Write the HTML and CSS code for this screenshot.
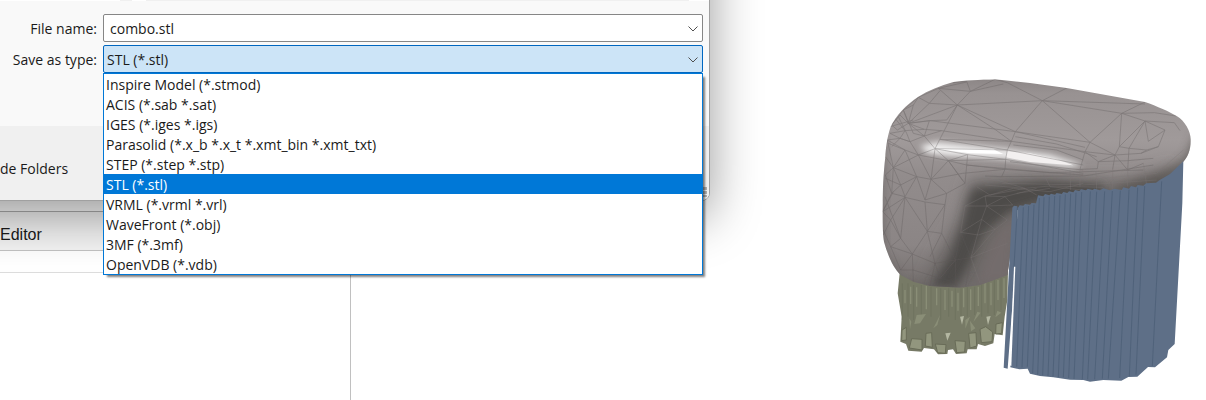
FILE: index.html
```
<!DOCTYPE html>
<html lang="en">
<head>
    <meta charset="UTF-8">
    <title>Save As</title>
    <link rel="stylesheet" href="styles.css">
</head>
<body>
    <div class="app">
        <div class="side-panel">
            <div class="side-title">Editor</div>
            <div class="side-header"></div>
            <div class="side-body"></div>
        </div>
        <div class="viewport">
            <svg class="model" viewBox="0 0 1008 990" role="img" aria-label="Model preview">
                <defs>
                    <linearGradient id="skin" x1="0" y1="0" x2="0" y2="1">
                        <stop offset="0" stop-color="#857f7f"/>
                        <stop offset="0.1" stop-color="#989292"/>
                        <stop offset="0.3" stop-color="#a09a9a"/>
                        <stop offset="0.45" stop-color="#928c8c"/>
                        <stop offset="0.75" stop-color="#8b8585"/>
                        <stop offset="1" stop-color="#696462"/>
                    </linearGradient>
                    <clipPath id="shape">
                        <path d="M375 28C330 29 280 32 250 36C210 47 175 62 145 80C110 102 75 140 62 170C50 205 47 240 46 260C40 310 38 370 38 400C37 450 38 490 42 515C52 552 68 592 92 615L130 635 180 648 270 653 330 645 412 615 440 420 540 390 780 360 860 345 905 312 940 275C953 262 963 238 962 208C962 185 945 152 920 138C900 126 860 108 825 96L590 54 480 39Z"/>
                    </clipPath>
                    <filter id="soft" x="-50%" y="-50%" width="200%" height="200%"><feGaussianBlur stdDeviation="22"/></filter>
                    <filter id="softer" x="-50%" y="-50%" width="200%" height="200%"><feGaussianBlur stdDeviation="14"/></filter>
                    <filter id="glow" x="-20%" y="-50%" width="140%" height="200%"><feGaussianBlur stdDeviation="9"/></filter>
                </defs>

                <!-- lattice support -->
                <path fill="#777a66" d="M90 600 83 670 95 740 91 815 108 822 115 842 155 845 162 834 192 838 204 853 232 852 234 840 249 838 258 852 290 850 293 838 320 838 324 822 345 828 370 820 374 792 398 796 404 740 412 690 414 600Z"/>
                <path stroke="#8a8e77" stroke-width="4" fill="none" d="M105 660V700M122 650V702M140 652V710M169 648V718M200 655V706M225 660V720M246 662V710M264 668V722M281 655V712M302 658V720M325 650V708M345 640V700M363 638V706M384 630V690M402 625V684"/>
                <path stroke="#6d705c" stroke-width="2" fill="none" d="M97 640V750M114 640V740M131 645V750M154 645V740M183 650V740M212 655V750M236 655V740M256 655V750M273 655V745M292 650V740M314 650V735M335 640V740M354 635V730M373 628V735M393 620V720"/>
                <path fill="#92967e" stroke="#696c58" stroke-width="3" d="M96 780 109 772V810L95 812ZM125 806 156 808V840L118 834ZM168 790 185 788 187 832 166 828ZM196 822 228 824 226 850 203 848ZM255 812 286 814 284 846 260 848ZM296 790 318 788 320 828 300 834ZM330 778 347 770 368 786 366 815 334 818ZM378 762 397 758 395 790 377 792Z"/>
                <path fill="#8a8e77" d="M118 745 124 755 120 778ZM140 735 168 732 150 760 133 762ZM210 735 202 765 190 775ZM322 725 332 728 310 756ZM300 752 316 775 303 784ZM382 722 394 728 376 742ZM286 750 300 740 286 776Z"/>
                <path fill="#b4b7a2" d="M270 740 282 738 276 764ZM349 740 362 738 354 765ZM226 790 242 788 232 812Z"/>

                <!-- shell -->
                <g clip-path="url(#shape)">
                    <path fill="url(#skin)" d="M0 0H1008V700H0Z"/>
                    <path fill="#6c6766" filter="url(#soft)" d="M300 330 500 322 760 332 920 290 880 380 500 430 430 640 150 670 200 560 270 440Z"/>
                    <path fill="#4e4b49" filter="url(#softer)" d="M310 356 420 346 520 336 700 346 700 375 500 400 420 425 340 490 300 580 260 650 180 655 240 560 275 470 295 390Z"/>
                    <path fill="#736c6c" filter="url(#softer)" d="M440 430 385 480 345 560 320 640 420 640Z"/>
                    <path fill="#514d4a" opacity="0.6" filter="url(#softer)" d="M975 190 945 262 870 310 740 350 740 375 900 370 1000 250Z"/>
                    <path fill="#5c5856" opacity="0.6" filter="url(#softer)" d="M30 520 95 635 260 670 100 680 20 620Z"/>
                    <path fill="#605b5a" opacity="0.6" filter="url(#softer)" d="M34 200 48 220 42 400 46 530 20 530Z"/>
                    <path fill="#ffffff" opacity="0.85" filter="url(#glow)" d="M150 228 200 216 400 236 540 254 640 285 600 292 400 266 230 258 170 248Z"/>
                    <path fill="#ffffff" d="M195 236 370 238 400 252 300 250Z"/>
                    <path fill="#f3f0f0" d="M412 244 480 250 560 268 610 286 480 276 408 262Z"/>
                    <g class="mesh">
                        <path d="M250 38 290 34 301 64 375 28 412 38 517 92 590 54M145 82 205 55 301 64 262 105 178 100 145 82M301 64 400 42M205 55 290 36M205 55 262 105 517 92 436 185 262 105M100 120 145 82 130 105 100 120M178 100 210 62M178 100 115 160 262 105 195 236M262 105 372 176 424 214M262 105 230 150 178 152 115 160M436 185 424 214 412 240 407 268"/>
                        <path d="M517 92 825 102M517 92 755 130 825 96M517 92 660 217 755 130 748 230 825 153 755 130 853 128 918 138M825 153 835 214 885 180 825 153 913 158 930 182M660 217 645 245 630 298M660 217 735 255M748 230 777 235 825 153M777 235 830 240 865 230 885 180M777 235 773 300M748 230 735 255 728 298M645 245 735 255 813 250 865 230M645 245 685 275 735 255M685 275 682 296 630 298M685 275 773 272 850 265M735 255 773 300 820 280M830 240 813 250"/>
                        <path d="M65 165 100 120 115 160 90 135 65 165 82 180 115 160 180 152 436 185 660 217M60 190 105 182 163 178 215 182 424 214M85 140 110 190 120 215 90 205 60 190M100 120 130 190 163 198 120 215 145 255 195 236 163 198 215 182M52 210 90 205 120 215M55 220 105 240 145 255M163 198 178 152M60 170 95 160 130 150M75 145 105 182 90 205 65 230M130 105 115 160 163 198M115 160 163 178"/>
                        <path d="M195 236 412 240M195 236 293 254 407 268 640 310M210 208 424 214 645 245M210 208 412 240 640 285M407 268 235 272 145 255 70 293 52 210 105 240 70 293 140 320 183 328 235 272 290 285 405 298 640 315M145 255 183 328 195 236M195 236 235 272 293 254 285 340 235 272 278 332M183 328 278 310 405 298 407 268M405 298 395 320 345 318M436 185 540 208 645 232M436 200 560 222 680 260M430 225 560 240 640 270M420 275 540 290 640 300M290 285 540 308 820 300M395 320 640 318 850 285"/>
                        <path d="M46 260 70 293 65 370 46 315 70 293M105 240 140 320 92 345 70 293M46 325 92 345 65 370 105 380 140 320 165 390 183 328M65 370 38 425 70 365M105 380 92 345M165 390 230 370 183 328M230 370 285 340M230 370 225 404 165 396 105 382 38 425M165 396 172 484 105 382 92 505 45 380M225 404 172 484 127 552 92 505 62 450 105 382M225 404 215 490 172 484 195 580 127 552 62 530 40 480M127 552 130 635M92 505 62 530 92 600 127 552M195 580 256 570 210 625 195 580 180 648M256 570 303 563 272 487 256 570 258 650M303 563 287 650M210 625 256 570M38 425 62 450 40 495M210 625 130 600 92 600M180 560 215 490 256 570"/>
                    </g>
                    <g class="mesh shaded">
                        <path d="M285 408 350 408 428 405M350 408 335 448 272 487 285 408 345 378 350 408 405 380 428 405M335 448 375 478 412 450 350 408M375 478 303 563 335 448M272 487 325 495 375 478M303 563 412 520M303 563 330 640M345 378 405 380 500 355M320 350 360 375 430 355 540 365 640 340M345 345 465 355 540 348 700 352M380 330 465 355 500 375M345 378 465 355M440 370 540 355M395 340 640 345 860 330M520 310 540 350 640 360M600 300 602 360M678 305 680 360M728 298V358M773 300V350M820 280 830 345M640 330 860 310 940 240M630 298V350"/>
                    </g>
                </g>

                <!-- blue supports -->
                <path fill="#5e6f87" d="M427 413 432 407 442 409 436 588 413 896 401 893ZM443 415 449 406 460 407 465 402 480 404 485 399 498 400 504 376 520 379 525 372 538 376 543 371 555 374 560 369 575 372 580 366 592 369 597 364 610 367 615 360 628 363 633 358 648 361 653 356 668 360 673 356 690 361 700 355 720 361 733 356 755 360 760 352 777 356 783 348 798 352 803 345 820 347 828 340 858 338 868 331 900 312 940 274 937 400 914 822 895 840 891 862 855 892 834 891 802 920 775 921 754 932 700 930 660 935 640 930 600 929 550 922 510 918 480 911 473 896 448 898 421 892 433 588Z"/>
                <path class="ribs" d="M442 412 432 590M460 412 440 890M476 408 456 892M492 404 472 890M508 384 488 910M522 382 503 914M538 380 518 916M554 378 534 918M570 376 549 920M586 373 565 921M602 371 580 922M618 368 596 924M635 366 612 927M661 364 637 928M680 365 653 928M704 364 674 928M727 363 697 926M751 362 715 926M777 359 749 924M803 353 778 918M824 348 798 914M875 334 847 888"/>
                <path fill="#ffffff" d="M432 590H436L424 888 419 886Z"/>
            </svg>
        </div>
    </div>

    <form class="dialog">
        <div class="files-edge"><span class="edge-nav"></span><span class="edge-list"></span></div>
        <div class="fields">
            <label for="filename">File name:</label>
            <div class="field">
                <input class="control" type="text" id="filename" value="combo.stl">
                <svg class="chevron" viewBox="0 0 10 6"><path d="M0.5 0.5 5 5 9.5 0.5"/></svg>
            </div>
            <label for="filetype">Save as type:</label>
            <div class="field">
                <select class="control open" id="filetype">
                    <option>STL (*.stl)</option>
                </select>
                <svg class="chevron" viewBox="0 0 10 6"><path d="M0.5 0.5 5 5 9.5 0.5"/></svg>
                <ul class="type-list" role="listbox" aria-label="Save as type">
                    <li role="option">Inspire Model (*.stmod)</li>
                    <li role="option">ACIS (*.sab *.sat)</li>
                    <li role="option">IGES (*.iges *.igs)</li>
                    <li role="option">Parasolid (*.x_b *.x_t *.xmt_bin *.xmt_txt)</li>
                    <li role="option">STEP (*.step *.stp)</li>
                    <li role="option" class="selected" aria-selected="true">STL (*.stl)</li>
                    <li role="option">VRML (*.vrml *.vrl)</li>
                    <li role="option">WaveFront (*.obj)</li>
                    <li role="option">3MF (*.3mf)</li>
                    <li role="option">OpenVDB (*.vdb)</li>
                </ul>
            </div>
        </div>
        <div class="dialog-footer">
            <button class="folders-toggle" type="button">de Folders</button>
            <span class="grip"></span>
        </div>
    </form>
</body>
</html>
```
FILE: styles.css
```
* {
    box-sizing: border-box;
}

body {
    margin: 0;
    position: relative;
    overflow: hidden;
    background-color: #fff;
    color: #1a1a1a;
    font-family: "Open Sans", "Noto Sans", sans-serif;
    font-size: 14px;
}

/* application behind the dialog */
.app {
    display: grid;
    grid-template-columns: 351px 1fr;
    min-height: 100vh;
}

.side-panel {
    display: grid;
    grid-template-rows: 40px 22px 1fr;
    padding-top: 211px;
}

.side-title {
    border-top: 1px solid #b0b0b0;
    border-bottom: 1px solid #c4c4c4;
    background-color: #f5f5f5;
    font-family: "Liberation Sans", Arial, sans-serif;
    font-size: 16px;
    line-height: 46px;
}

.side-header {
    border-bottom: 1px solid #dcdcdc;
}

.side-body {
    border-right: 1px solid #c0c0c0;
}

.viewport {
    display: flex;
    justify-content: flex-end;
    padding-top: 70px;
}

.model {
    width: 336px;
    height: 330px;
}

.mesh {
    fill: none;
    stroke: #5f5b5a;
    stroke-width: 2;
    opacity: 0.5;
}

.mesh.shaded {
    stroke: #7d7877;
}

.ribs {
    fill: none;
    stroke: #4c5f77;
    stroke-width: 3;
    opacity: 0.8;
}

/* save dialog, its top left corner is out of the window */
.dialog {
    position: absolute;
    top: -81px;
    left: -81px;
    right: 496px;
    padding: 80px 0 0 80px;
    border: 1px solid #a0a0a0;
    border-radius: 8px;
    background-color: #f9f9f9;
    box-shadow: 0 16px 50px rgba(0, 0, 0, 0.4);
}

.files-edge {
    display: flex;
    gap: 14px;
    height: 1px;
    padding: 0 20px 0 120px;
    background-color: #fff;
}

.edge-nav {
    width: 12px;
    background-color: #f0f0f0;
}

.edge-list {
    flex: 1;
    background-color: #f0f0f0;
}

.fields {
    display: grid;
    grid-template-columns: 97px 1fr;
    gap: 3px 6px;
    align-items: center;
    padding: 13px 6px 53px 0;
}

.fields label {
    text-align: right;
    white-space: nowrap;
}

.field {
    position: relative;
}

.control {
    display: block;
    width: 100%;
    height: 28px;
    padding: 0 24px 0 6px;
    border: 1px solid #868686;
    border-radius: 2px;
    background-color: #fff;
    color: inherit;
    font: inherit;
    appearance: none;
    outline: none;
}

.control.open {
    padding-left: 3px;
    border-color: #0067c0;
    background-color: #cce4f7;
}

.chevron {
    position: absolute;
    top: 12px;
    right: 5px;
    width: 10px;
    height: 6px;
    fill: none;
    stroke: #505050;
    overflow: visible;
}

.type-list {
    position: absolute;
    z-index: 1;
    top: 100%;
    left: 0;
    right: 0;
    margin: 0;
    padding: 0;
    border: 1px solid #0078d7;
    background-color: #fff;
    box-shadow: 3px 3px 2px -1px rgba(0, 0, 0, 0.5);
    list-style: none;
}

.type-list li {
    height: 20px;
    padding-left: 2px;
    line-height: 22px;
    white-space: nowrap;
}

.type-list .selected {
    background-color: #0078d7;
    color: #fff;
}

.dialog-footer {
    display: flex;
    justify-content: space-between;
    align-items: flex-end;
    height: 74px;
    margin-left: -80px;
    padding: 0 2px 3px 80px;
    border-radius: 0 0 7px 0;
    background-color: #f0f0f0;
}

.folders-toggle {
    align-self: center;
    height: 32px;
    margin-top: 14px;
    padding: 0;
    border: 0;
    background: none;
    color: inherit;
    font: inherit;
    white-space: nowrap;
}

.grip {
    width: 4px;
    height: 10px;
    background: repeating-linear-gradient(#b0b0b0 0 3px, #f0f0f0 3px 4px);
}
```
